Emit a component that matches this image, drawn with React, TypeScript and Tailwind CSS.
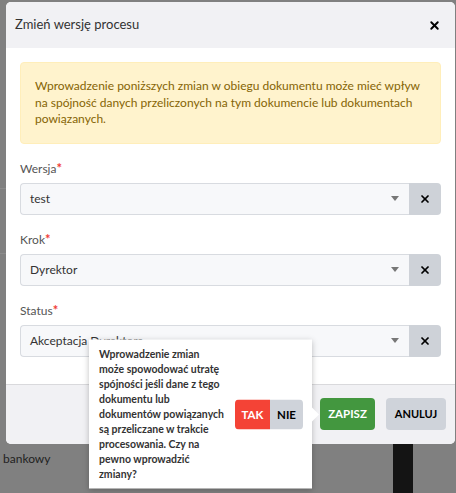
import { X } from 'lucide-react'

const font = { fontFamily: 'Lato, "Noto Sans", sans-serif' }

const confirmLines = [
  'Wprowadzenie zmian',
  'może spowodować utratę',
  'spójności jeśli dane z tego',
  'dokumentu lub',
  'dokumentów powiązanych',
  'są przeliczane w trakcie',
  'procesowania. Czy na',
  'pewno wprowadzić',
  'zmiany?',
]

function SelectField({ label, value }: { label: string; value: string }) {
  return (
    <div className="mt-[15px]">
      <div className="h-[18px] text-[12px] leading-[18px] text-[#555]">
        {label}
        <span className="text-[13px] font-bold text-[#f03c36]">*</span>
      </div>
      <div className="mt-[6px] flex h-[32px]">
        <div className="flex flex-1 items-center rounded-l-[4px] border border-r-0 border-[#d8dbe0] bg-[#f7f8fa] pl-[9px] pr-[10px]">
          <span className="flex-1 text-[12px] text-[#333]">{value}</span>
          {/* dropdown caret */}
          <span className="h-0 w-0 border-x-[4px] border-t-[5px] border-x-transparent border-t-[#777]" />
        </div>
        <button className="flex w-[32px] items-center justify-center rounded-r-[4px] bg-[#ced2d8]">
          <X size={12} strokeWidth={3.5} className="text-black" />
        </button>
      </div>
    </div>
  )
}

export default function App() {
  return (
    <div className="relative h-[493px] w-[456px] overflow-hidden bg-[#808080]" style={font}>
      {/* faint table lines of the page behind the backdrop */}
      <div className="absolute left-0 top-[188px] h-px w-[6px] bg-[#8c8c8c]" />
      <div className="absolute left-0 top-[253px] h-px w-[6px] bg-[#8c8c8c]" />

      <div className="ml-[6px] mt-[2px] w-[449px] rounded-[5px] bg-white">
        <div className="flex h-[46px] items-center justify-between rounded-t-[5px] bg-[#f1f1f4] pl-[9px] pr-[14px]">
          <h2 className="text-[13px] text-[#333]">Zmień wersję procesu</h2>
          <X size={13} strokeWidth={3.5} className="text-black" />
        </div>

        <div className="px-[14px] pb-[27px] pt-[14px]">
          <div className="rounded-[4px] border border-[#ffeeba] bg-[#fff3cd] py-[15px] pl-[14px] pr-[8px] text-[12px] leading-[16.5px] text-[#856404]">
            Wprowadzenie poniższych zmian w obiegu dokumentu może mieć wpływ na spójność danych przeliczonych na tym dokumencie lub dokumentach powiązanych.
          </div>
          <SelectField label="Wersja" value="test" />
          <SelectField label="Krok" value="Dyrektor" />
          <SelectField label="Status" value="Akceptacja Dyrektora" />
        </div>

        <div className="flex h-[60px] items-center justify-end gap-[11px] rounded-b-[5px] border-t border-[#d9d9dc] bg-[#f1f1f4] pr-[9px]">
          <div className="relative">
            <button className="h-[32px] w-[55px] rounded-[4px] bg-[#43973f] text-[11.5px] font-bold text-white">
              ZAPISZ
            </button>

            {/* confirmation popover */}
            <div className="absolute right-full top-1/2 z-10 mr-[8px] flex -translate-y-1/2 items-center gap-[11px] bg-white py-[7px] pl-[10px] pr-[9px] shadow-[0_1px_6px_rgba(0,0,0,0.25)]">
              <p className="whitespace-nowrap text-[10.5px] font-bold leading-[15px] text-[#333]">
                {confirmLines.map((line, i) => (
                  <span key={i} className="block">
                    {line}
                  </span>
                ))}
              </p>
              <div className="flex h-[30px] overflow-hidden rounded-[4px] text-[11.5px] font-bold">
                <button className="w-[35px] bg-[#f44336] text-white">TAK</button>
                <button className="w-[33px] bg-[#cfd3da] text-black">NIE</button>
              </div>
              <span className="absolute left-full top-1/2 h-0 w-0 -translate-y-1/2 border-y-[7px] border-l-[7px] border-y-transparent border-l-white" />
            </div>
          </div>
          <button className="h-[32px] w-[60px] rounded-[4px] bg-[#cfd3da] text-[11px] font-bold text-black">
            ANULUJ
          </button>
        </div>
      </div>

      {/* page content showing below the dialog */}
      <div className="flex">
        <span className="ml-[3px] mt-[6px] text-[12px] text-[#1f1f1f]">bankowy</span>
        <div className="ml-auto mr-[43px] h-[49px] w-[20px] bg-[#141414]" />
      </div>
    </div>
  )
}
